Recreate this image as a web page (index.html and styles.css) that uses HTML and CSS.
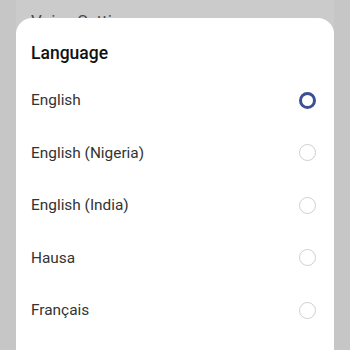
FILE: index.html
```html
<!DOCTYPE html>
<html>
<head>
<meta charset="utf-8">
<link rel="stylesheet" href="styles.css">
</head>
<body>
<div class="screen">
  <div class="under">
    <div class="under-title">Voice Settings</div>
  </div>
  <div class="dialog">
    <div class="title">Language</div>
    <div class="row"><span class="label">English</span><span class="radio on"></span></div>
    <div class="row"><span class="label">English (Nigeria)</span><span class="radio"></span></div>
    <div class="row"><span class="label">English (India)</span><span class="radio"></span></div>
    <div class="row"><span class="label">Hausa</span><span class="radio"></span></div>
    <div class="row"><span class="label">Français</span><span class="radio"></span></div>
  </div>
</div>
</body>
</html>
```
FILE: styles.css
```css
html, body {
  margin: 0;
  padding: 0;
  width: 350px;
  height: 350px;
  overflow: hidden;
  background: #c6c6c6;
  font-family: Roboto, "Noto Sans", sans-serif;
}
.screen {
  position: relative;
  width: 350px;
  height: 350px;
  padding: 0 16px;
  box-sizing: border-box;
}
.under {
  background: #cbcbcb;
  height: 350px;
  padding: 0 15px;
}
.under-title {
  padding-top: 11px;
  font-size: 17px;
  line-height: 20px;
  color: #4a4a4a;
}
.dialog {
  position: absolute;
  left: 16px;
  top: 18px;
  width: 318px;
  height: 332px;
  background: #ffffff;
  border-radius: 16px 16px 0 0;
  box-sizing: border-box;
  padding: 25px 18px 0 15px;
}
.title {
  font-size: 17.5px;
  font-weight: 500;
  line-height: 20px;
  color: #111;
  margin-bottom: 10.75px;
}
.row {
  height: 52.5px;
  display: flex;
  align-items: center;
  justify-content: space-between;
}
.label {
  font-size: 15.4px;
  color: #333;
}
.radio {
  width: 17px;
  height: 17px;
  box-sizing: border-box;
  border-radius: 50%;
  border: 1px solid #cfcfcf;
}
.radio.on {
  width: 17px;
  height: 17px;
  border: 3.5px solid #3c4f94;
}
```
